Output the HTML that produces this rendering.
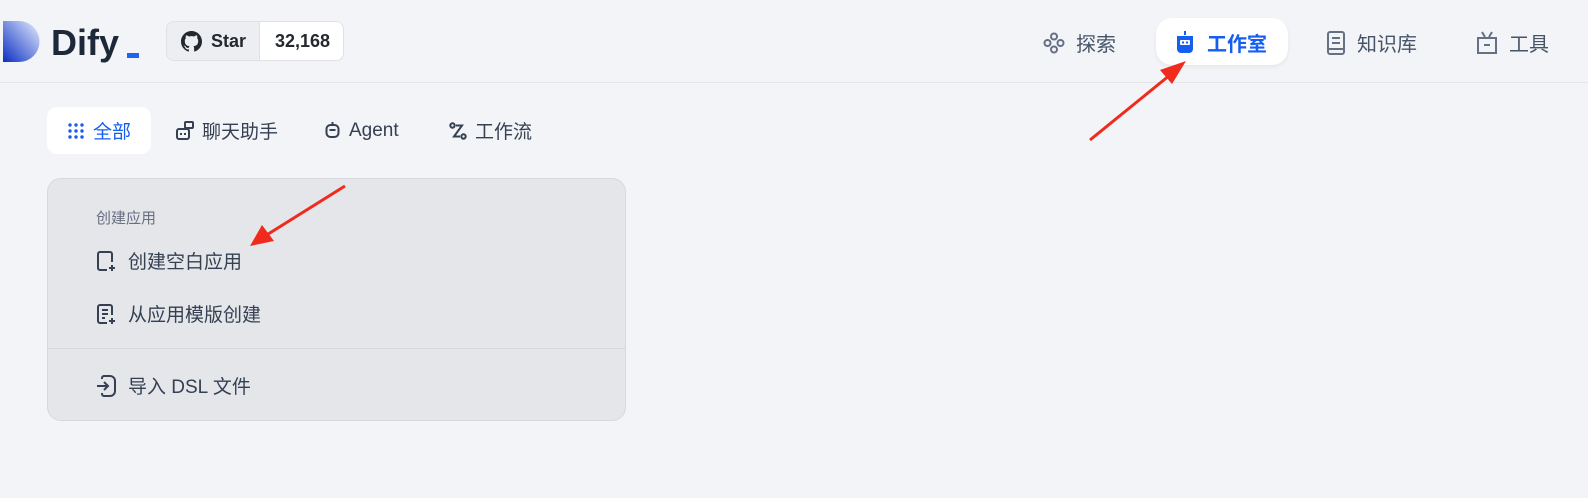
<!DOCTYPE html>
<html><head><meta charset="utf-8"><style>
*{margin:0;padding:0;box-sizing:border-box}
body{width:1588px;height:498px;background:#f2f4f7;font-family:"Liberation Sans","Noto Sans CJK SC",sans-serif;position:relative;overflow:hidden;color:#354052}
.hdr{position:absolute;left:0;top:0;width:1588px;height:83px;border-bottom:1px solid #e3e5e8}
.abs{position:absolute}
.nav{position:absolute;top:28px;font-size:20px;color:#475467;display:flex;align-items:center;gap:11px}
.tab{position:absolute;top:107px;height:47px;display:flex;align-items:center;gap:8px;font-size:19px;color:#354052}
.card{position:absolute;left:47px;top:178px;width:579px;height:243px;background:#e5e6ea;border:1px solid #d6d8dc;border-radius:14px}
.item{position:absolute;left:48px;display:flex;align-items:center;gap:12px;font-size:19px;color:#354052}
</style></head><body>
<div class="hdr"></div>
<svg class="abs" style="left:3px;top:21px" width="38" height="42"><defs><linearGradient id="g" x1="0" y1="1" x2="1" y2="0"><stop offset="0" stop-color="#0b2fc2"/><stop offset="1" stop-color="#e8efff"/></linearGradient></defs><path d="M0 0H16A20 20 0 0 1 16 41H0Z" fill="url(#g)"/></svg>
<div class="abs" style="left:51px;top:22px;font-size:36px;font-weight:bold;color:#1d2939">Dify</div>
<div class="abs" style="left:127px;top:53px;width:12px;height:5px;background:#1c64f2"></div>
<div class="abs" style="left:166px;top:21px;width:178px;height:40px;border:1px solid #dfe1e5;border-radius:8px;background:#eceef1;overflow:hidden">
<svg class="abs" style="left:14px;top:9px" width="21" height="21" viewBox="0 0 16 16"><path fill="#24292f" d="M8 0C3.58 0 0 3.58 0 8c0 3.54 2.29 6.53 5.470 7.590.4.07.55-.17.55-.38v-1.33c-2.230.48-2.7-1.07-2.7-1.07-.36-.92-.89-1.17-.89-1.17-.73-.5.05-.49.05-.49.8.06 1.23.83 1.23.83.71 1.22 1.87.87 2.33.66.07-.52.28-.87.5-1.07-1.78-.2-3.64-.89-3.64-3.95 0-.87.31-1.59.82-2.15-.08-.2-.36-1.02.08-2.12 0 0 .67-.21 2.2.82a7.6 7.6 0 0 1 4 0c1.53-1.04 2.2-.82 2.2-.82.44 1.1.16 1.92.08 2.12.51.56.82 1.27.82 2.15 0 3.07-1.87 3.75-3.65 3.95.29.25.54.73.54 1.48v2.2c0 .21.15.46.55.38A8.01 8.01 0 0 0 16 8c0-4.42-3.58-8-8-8z"/></svg>
<div class="abs" style="left:44px;top:9px;font-size:18px;font-weight:bold;color:#24292f">Star</div>
<div class="abs" style="left:92px;top:0;width:86px;height:40px;background:#fff;border-left:1px solid #dfe1e5;font-size:18px;font-weight:bold;color:#24292f;text-align:center;line-height:38px">32,168</div>
</div>
<div class="nav" style="left:1043px"><svg width="22" height="22" viewBox="0 0 22 22" fill="none" stroke="#667085" stroke-width="2"><circle cx="11" cy="4.5" r="3"/><circle cx="4.5" cy="11" r="3"/><circle cx="17.5" cy="11" r="3"/><circle cx="11" cy="17.5" r="3"/></svg>探索</div>
<div class="abs" style="left:1156px;top:18px;width:132px;height:47px;background:#fff;border-radius:16px;box-shadow:0 2px 4px rgba(0,0,0,.06)"></div>
<div class="nav" style="left:1174px;color:#155eef;font-weight:bold"><svg width="22" height="24" viewBox="0 0 22 24"><rect x="10" y="0" width="2" height="4" fill="#155eef"/><path d="M3 5h16v13a4 4 0 0 1-4 4H7a4 4 0 0 1-4-4z" fill="#155eef"/><rect x="6" y="9" width="10" height="5" rx="1" fill="#fff"/><rect x="8" y="10.5" width="2" height="2" fill="#155eef"/><rect x="12" y="10.5" width="2" height="2" fill="#155eef"/></svg>工作室</div>
<div class="nav" style="left:1326px"><svg width="20" height="24" viewBox="0 0 20 24" fill="none" stroke="#667085" stroke-width="2"><rect x="2" y="1" width="16" height="22" rx="2"/><path d="M6 7h8M6 12h8M2 18h16"/></svg>知识库</div>
<div class="nav" style="left:1476px"><svg width="22" height="24" viewBox="0 0 22 24" fill="none" stroke="#667085" stroke-width="2"><path d="M6 1l3 5M16 1l-3 5M2 7h18v15H2z"/><path d="M8 14h6"/></svg>工具</div>
<div class="abs" style="left:47px;top:107px;width:104px;height:47px;background:#fff;border-radius:10px"></div>
<div class="tab" style="left:67px;color:#155eef"><svg width="18" height="18" fill="#155eef"><circle cx="3" cy="3" r="1.7"/><circle cx="9" cy="3" r="1.7"/><circle cx="15" cy="3" r="1.7"/><circle cx="3" cy="9" r="1.7"/><circle cx="9" cy="9" r="1.7"/><circle cx="15" cy="9" r="1.7"/><circle cx="3" cy="15" r="1.7"/><circle cx="9" cy="15" r="1.7"/><circle cx="15" cy="15" r="1.7"/></svg>全部</div>
<div class="tab" style="left:176px"><svg width="18" height="20" viewBox="0 0 18 20" fill="none" stroke="#354052" stroke-width="2"><rect x="1" y="8" width="12" height="10" rx="2"/><rect x="9" y="1" width="8" height="6" rx="1"/><path d="M5 12v2M9 12v2"/></svg>聊天助手</div>
<div class="tab" style="left:324px"><svg width="17" height="18" viewBox="0 0 16 18" fill="none" stroke="#354052" stroke-width="2"><rect x="2" y="3" width="12" height="12" rx="4"/><path d="M5 8h6M8 0v3"/></svg>Agent</div>
<div class="tab" style="left:449px"><svg width="18" height="18" viewBox="0 0 18 18" fill="none" stroke="#354052" stroke-width="2"><circle cx="3.5" cy="3.5" r="2.2"/><circle cx="14.5" cy="14.5" r="2.2"/><path d="M7 3.5h6l-8 11h6"/></svg>工作流</div>
<div class="card">
<div class="abs" style="left:48px;top:28px;font-size:15px;color:#676f83">创建应用</div>
<div class="item" style="top:68px"><svg width="20" height="22" viewBox="0 0 20 22" fill="none" stroke="#354052" stroke-width="2"><path d="M11 20H4a2 2 0 0 1-2-2V4a2 2 0 0 1 2-2h10a2 2 0 0 1 2 2v8"/><path d="M16 15v6M13 18h6"/></svg>创建空白应用</div>
<div class="item" style="top:121px"><svg width="20" height="22" viewBox="0 0 20 22" fill="none" stroke="#354052" stroke-width="2"><path d="M11 20H4a2 2 0 0 1-2-2V4a2 2 0 0 1 2-2h10a2 2 0 0 1 2 2v8M6 7h6M6 11h6M6 15h3"/><path d="M16 15v6M13 18h6"/></svg>从应用模版创建</div>
<div class="abs" style="left:0;top:169px;width:577px;height:1px;background:#d6d8dc"></div>
<div class="item" style="top:193px"><svg width="20" height="22" viewBox="0 0 20 22" fill="none" stroke="#354052" stroke-width="2"><path d="M6 4V3a2 2 0 0 1 2-2h6a5 5 0 0 1 5 5v10a5 5 0 0 1-5 5H8a2 2 0 0 1-2-2v-1M1 11h11M8 7l4 4-4 4"/></svg>导入 DSL 文件</div>
</div>
<svg class="abs" style="left:0;top:0" width="1588" height="498">
<path d="M1090 140L1170 75" stroke="#f02a1c" stroke-width="3"/><path d="M1186 61L1160 70L1172 84Z" fill="#f02a1c"/>
<path d="M345 186L265 236" stroke="#f02a1c" stroke-width="3"/><path d="M250 246L262 225L274 241Z" fill="#f02a1c"/>
</svg>
</body></html>
